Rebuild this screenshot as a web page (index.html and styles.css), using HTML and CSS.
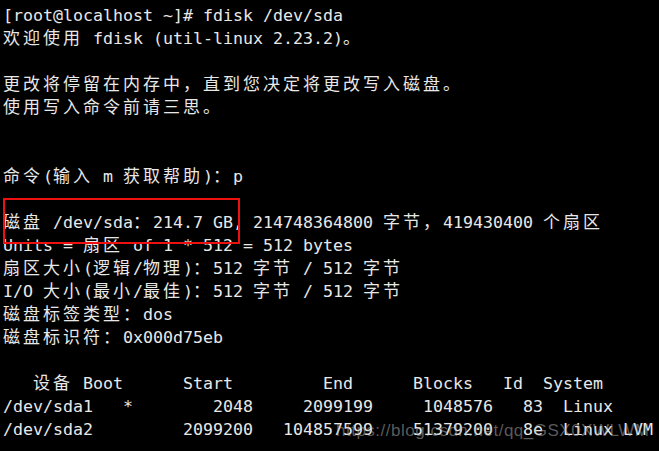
FILE: index.html
```
<!DOCTYPE html>
<html lang="zh-CN">
<head>
<meta charset="utf-8">
<title>fdisk</title>
<link rel="stylesheet" href="styles.css">
</head>
<body>
<div class="screen">
<pre class="term">[root@localhost ~]# fdisk /dev/sda
<span class="z">欢迎使用</span> fdisk (util-linux 2.23.2)<span class="z">。</span>

<span class="z">更改将停留在内存中，直到您决定将更改写入磁盘。</span>
<span class="z">使用写入命令前请三思。</span>


<span class="z">命令</span>(<span class="z">输入</span> m <span class="z">获取帮助</span>)<span class="z">：</span>p

<span class="z">磁盘</span> /dev/sda<span class="z">：</span>214.7 GB, 214748364800 <span class="z">字节，</span>419430400 <span class="z">个扇区</span>
Units = <span class="z">扇区</span> of 1 * 512 = 512 bytes
<span class="z">扇区大小</span>(<span class="z">逻辑</span>/<span class="z">物理</span>)<span class="z">：</span>512 <span class="z">字节</span> / 512 <span class="z">字节</span>
I/O <span class="z">大小</span>(<span class="z">最小</span>/<span class="z">最佳</span>)<span class="z">：</span>512 <span class="z">字节</span> / 512 <span class="z">字节</span>
<span class="z">磁盘标签类型：</span>dos
<span class="z">磁盘标识符：</span>0x000d75eb

   <span class="z">设备</span> Boot      Start         End      Blocks   Id  System
/dev/sda1   *        2048     2099199     1048576   83  Linux
/dev/sda2         2099200   104857599    51379200   8e  Linux LVM</pre>
<div class="highlight"></div>
<div class="watermark">https://blog.csdn.net/qq_GSX0XWLWM</div>
</div>
</body>
</html>
```
FILE: styles.css
```
html, body {
  margin: 0;
  padding: 0;
  background: #000;
}

.screen {
  position: relative;
  width: 659px;
  height: 451px;
  overflow: hidden;
  background: #000;
}

.term {
  margin: 0;
  padding: 4px 0 0 3px;
  font-family: "DejaVu Sans Mono", "Noto Sans CJK SC", monospace;
  font-size: 16.61px;
  line-height: 23px;
  color: #e8e8e8;
  white-space: pre;
}

.z {
  font-family: "Noto Sans CJK SC", sans-serif;
  font-size: 17px;
  letter-spacing: 3px;
  line-height: 1;
}

.highlight {
  position: absolute;
  left: 3px;
  top: 198px;
  width: 233px;
  height: 42px;
  border: 2px solid #ee1111;
}

.watermark {
  position: absolute;
  left: 336px;
  top: 421px;
  font-family: "Liberation Sans", Arial, sans-serif;
  font-size: 17px;
  line-height: 20px;
  letter-spacing: 0.5px;
  color: rgba(180, 180, 180, 0.5);
  white-space: nowrap;
}
```
